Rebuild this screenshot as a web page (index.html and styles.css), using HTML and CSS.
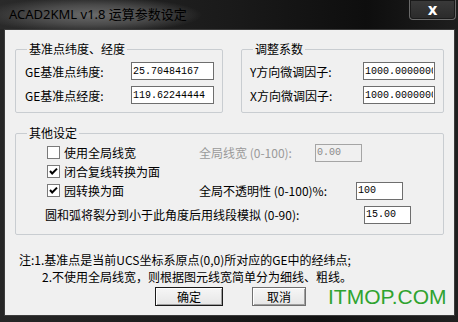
FILE: index.html
```html
<!DOCTYPE html>
<html lang="zh-CN">
<head>
  <meta charset="UTF-8">
  <title>ACAD2KML v1.8 运算参数设定</title>
  <link rel="stylesheet" href="styles.css">
</head>
<body>
  <div class="window">
    <div class="titlebar">
      <span class="title">ACAD2KML v1.8 运算参数设定</span>
      <button class="close">x</button>
    </div>

    <div class="client">
      <div class="top-groups">
        <fieldset class="group group-base">
          <legend>基准点纬度、经度</legend>
          <div class="group-body">
            <div class="field">
              <label>GE基准点纬度:</label>
              <input class="num wide" value="25.70484167" readonly>
            </div>
            <div class="field">
              <label>GE基准点经度:</label>
              <input class="num wide" value="119.62244444" readonly>
            </div>
          </div>
        </fieldset>

        <fieldset class="group group-adjust">
          <legend>调整系数</legend>
          <div class="group-body">
            <div class="field">
              <label>Y方向微调因子:</label>
              <input class="num factor" value="1000.0000000" readonly>
            </div>
            <div class="field">
              <label>X方向微调因子:</label>
              <input class="num factor" value="1000.0000000" readonly>
            </div>
          </div>
        </fieldset>
      </div>

      <fieldset class="group group-other">
        <legend>其他设定</legend>
        <div class="other-body">
          <div class="opt-row">
            <label class="check"><span class="box"></span>使用全局线宽</label>
            <span class="opt-label disabled lw-label">全局线宽 (0-100):</span>
            <input class="num small" value="0.00" disabled>
          </div>
          <div class="opt-row">
            <label class="check"><span class="box checked"><svg viewBox="0 0 11 11" width="11" height="11"><path d="M2 5 L4.2 7.5 L9 2.6" fill="none" stroke="#000" stroke-width="2"/></svg></span>闭合复线转换为面</label>
          </div>
          <div class="opt-row">
            <label class="check"><span class="box checked"><svg viewBox="0 0 11 11" width="11" height="11"><path d="M2 5 L4.2 7.5 L9 2.6" fill="none" stroke="#000" stroke-width="2"/></svg></span>园转换为面</label>
            <span class="opt-label op-label">全局不透明性 (0-100)%:</span>
            <input class="num small" value="100" readonly>
          </div>
          <div class="opt-row arc-row">
            <span class="opt-label arc-label">圆和弧将裂分到小于此角度后用线段模拟 (0-90):</span>
            <input class="num small" value="15.00" readonly>
          </div>
        </div>
      </fieldset>

      <div class="notes">
        <p>注:1.基准点是当前UCS坐标系原点(0,0)所对应的GE中的经纬点;</p>
        <p class="indent">2.不使用全局线宽，则根据图元线宽简单分为细线、粗线。</p>
      </div>

      <div class="buttons">
        <button class="btn default">确定</button>
        <button class="btn cancel">取消</button>
      </div>
    </div>

    <div class="watermark">ITMOP.COM</div>
  </div>
</body>
</html>
```

FILE: styles.css
```css
body {
  margin: 0;
  padding: 0;
  background: #1a1a1a;
  font-family: "Noto Sans CJK SC", sans-serif;
  font-size: 12px;
  color: #000;
}

.window {
  position: relative;
  width: 458px;
  height: 322px;
  overflow: hidden;
  background: linear-gradient(90deg, #262626 0%, #1c1c1c 40%, #121212 70%, #202020 100%);
}

.titlebar {
  height: 29px;
  display: flex;
  align-items: flex-start;
  justify-content: space-between;
  background: radial-gradient(ellipse 110px 18px at 92px 15px, #6a6a6a 0%, #4a4a4a 55%, rgba(40, 40, 40, 0) 100%),
              linear-gradient(90deg, #2a2a2a 0%, #1a1a1a 50%, #0e0e0e 80%, #1e1e1e 100%);
}

.title {
  margin: 6px 0 0 9px;
  font-family: "Noto Sans", "Noto Sans CJK SC", sans-serif;
  font-size: 13px;
  line-height: 17px;
  color: #000;
}

.close {
  width: 47px;
  height: 20px;
  margin-right: 2px;
  padding: 0;
  border: 1px solid #6a6a6a;
  border-top: none;
  border-radius: 0 0 4px 4px;
  background: linear-gradient(#3a3a3a, #2a2a2a);
  box-shadow: inset 0 0 0 1px #1a1a1a;
  color: #fff;
  font-family: "DejaVu Sans", sans-serif;
  font-size: 15px;
  font-weight: bold;
  line-height: 16px;
}

.client {
  width: 451px;
  height: 287px;
  margin-left: 4px;
  box-sizing: border-box;
  border: 1px solid #3c3c3c;
  background: #f0f0f0;
}

.top-groups {
  display: flex;
  gap: 18px;
  margin: 12px 0 0 10px;
}

.group {
  margin: 0;
  padding: 0;
  border: 1px solid #c9cdd1;
  border-radius: 2px;
  box-sizing: border-box;
}

.group legend {
  margin-left: 11px;
  padding: 0 2px;
  font-size: 12px;
  line-height: 14px;
}

.group-base {
  width: 208px;
}

.group-adjust {
  width: 203px;
}

.group-body {
  display: flex;
  flex-direction: column;
  gap: 6px;
  padding: 6px 8px 8px 9px;
}

.group-adjust .group-body {
  padding-left: 8px;
}

.field {
  display: flex;
  align-items: center;
  justify-content: space-between;
  height: 18px;
}

.num {
  box-sizing: border-box;
  height: 18px;
  margin: 0;
  padding: 0 1px;
  border: 1px solid #6e6e6e;
  background: #fff;
  font-family: "Liberation Mono", monospace;
  font-size: 10px;
  color: #000;
  outline: none;
}

.wide {
  width: 83px;
}

.factor {
  width: 72px;
}

.small {
  width: 47px;
}

.num:disabled {
  background: #f0f0f0;
  border-color: #a5a5a5;
  color: #8a8a8a;
}

.group-other {
  width: 429px;
  margin: 13px 0 0 10px;
}

.other-body {
  padding: 3px 0 10px 29px;
}

.opt-row {
  display: flex;
  align-items: center;
  height: 19px;
}

.check {
  display: flex;
  align-items: center;
  width: 154px;
}

.box {
  display: flex;
  align-items: center;
  justify-content: center;
  width: 13px;
  height: 13px;
  margin: 0 4px 0 2px;
  box-sizing: border-box;
  border: 1px solid #7a7a7a;
  background: #fff;
}

.opt-label.disabled {
  color: #9a9a9a;
}

.lw-label {
  width: 116px;
}

.op-label {
  width: 157px;
}

.arc-row {
  margin-top: 5px;
}

.arc-label {
  width: 319px;
}

.notes {
  margin: 16px 0 0 14px;
}

.notes p {
  margin: 0;
  line-height: 17px;
}

.notes .indent {
  padding-left: 23px;
}

.buttons {
  display: flex;
  gap: 29px;
  margin: 2px 0 0 150px;
}

.btn {
  height: 19px;
  padding: 0;
  box-sizing: border-box;
  border: 1px solid #707070;
  background: linear-gradient(#f6f6f6, #e6e6e6);
  box-shadow: inset 1px 1px 0 #fff, inset -1px -1px 0 #a0a0a0;
  font-family: "Noto Sans CJK SC", sans-serif;
  font-size: 12px;
  line-height: 15px;
  color: #000;
}

.btn.default {
  width: 68px;
  border-color: #1a1a1a;
}

.btn.cancel {
  width: 54px;
}

.watermark {
  position: absolute;
  left: 328px;
  top: 285px;
  font-family: "Liberation Sans", Arial, sans-serif;
  font-size: 21px;
  line-height: 24px;
  color: #2fa32f;
}
```
